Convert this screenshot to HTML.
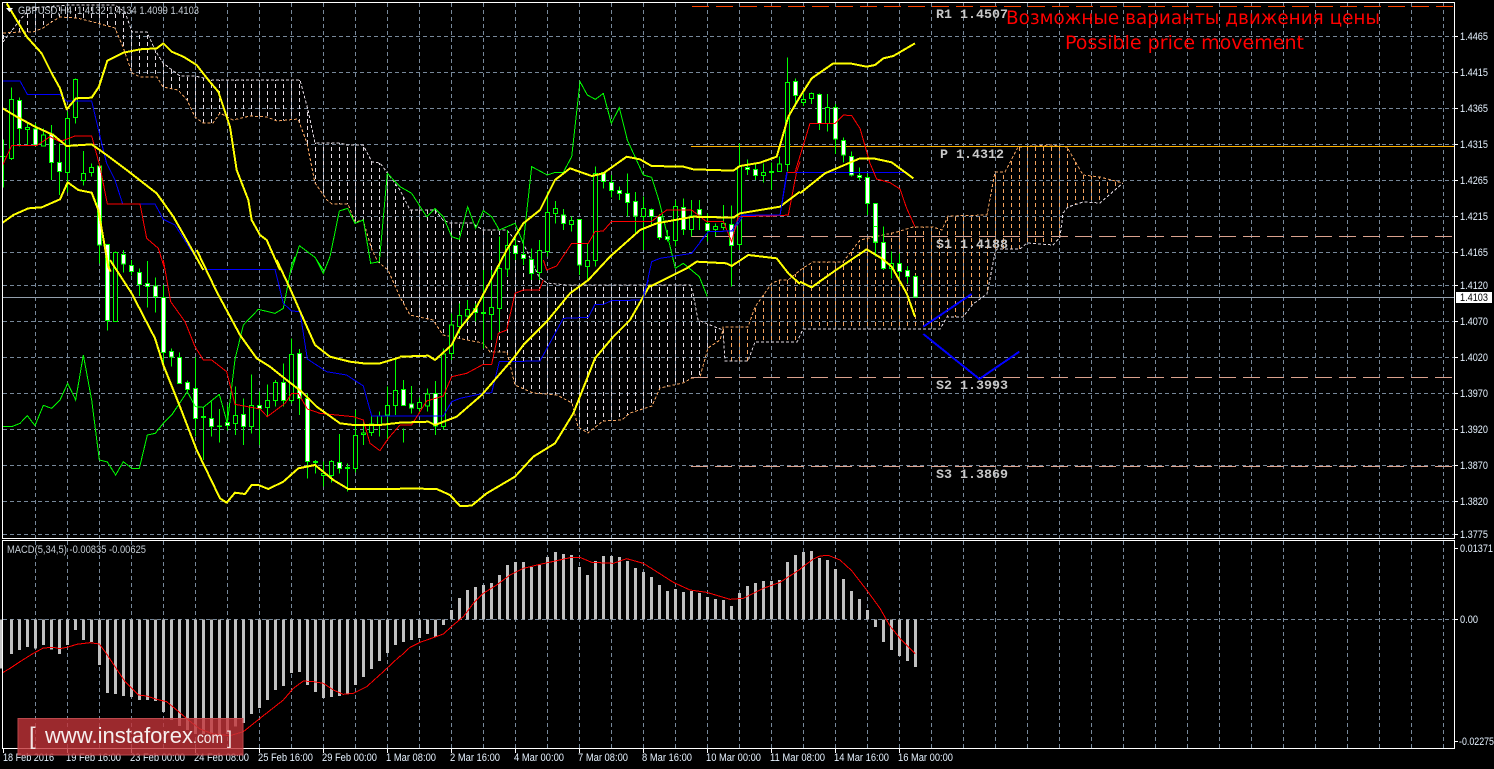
<!DOCTYPE html>
<html><head><meta charset="utf-8"><title>GBPUSD H4</title>
<style>
html,body{margin:0;padding:0;background:#000;width:1494px;height:769px;overflow:hidden}
svg{display:block}
.g{stroke:#77889a;stroke-width:1;stroke-dasharray:4 3;fill:none}
.w{stroke:#0f0;stroke-width:3;fill:none}
.h{stroke:#0f0;stroke-width:3;fill:#000}
.f{stroke:#0f0;stroke-width:3;fill:#fff}
.y{stroke:#ff0;stroke-width:6;fill:none;stroke-linejoin:round}
.b{stroke:#00f;stroke-width:3;fill:none}
.r{stroke:#f00;stroke-width:3;fill:none}
.l{stroke:#0f0;stroke-width:3;fill:none}
.m{stroke:#c0c0c0;stroke-width:9;fill:none}
.c{shape-rendering:crispEdges}
text{font-family:"Liberation Sans",sans-serif}
.ax{font-size:11px;fill:#e6f2ff}
.t{font-size:11px;fill:#e6f2ff}
.lv{font-family:"Liberation Mono",monospace;font-size:13.33px;font-weight:bold;fill:#c8c8c8}
.lg{font-size:11px;fill:#c4ccd4}
</style></head><body>
<svg width="1494" height="769" viewBox="0 0 1494 769" xmlns="http://www.w3.org/2000/svg">
<defs>
<pattern id="hw" patternUnits="userSpaceOnUse" width="8" height="7"><rect x="3" y="0" width="1" height="4" fill="#e2dae2"/></pattern>
<pattern id="hs" patternUnits="userSpaceOnUse" width="8" height="7"><rect x="3" y="0" width="1" height="4" fill="#f4a460"/></pattern>
</defs>
<rect width="1494" height="769" fill="#000"/>

<g class="c">
<!-- grid -->
<path class="g" d="M3 36.5H1454M3 72.5H1454M3 108.5H1454M3 144.5H1454M3 180.5H1454M3 216.5H1454M3 252.5H1454M3 285.5H1454M3 321.5H1454M3 357.5H1454M3 393.5H1454M3 429.5H1454M3 465.5H1454M3 501.5H1454M3 534.5H1454M3 619.5H1454"/>
<path class="g" d="M35.5 3V538M67.5 3V538M99.5 3V538M131.5 3V538M163.5 3V538M195.5 3V538M227.5 3V538M259.5 3V538M291.5 3V538M323.5 3V538M355.5 3V538M387.5 3V538M419.5 3V538M451.5 3V538M483.5 3V538M515.5 3V538M547.5 3V538M579.5 3V538M611.5 3V538M643.5 3V538M675.5 3V538M707.5 3V538M739.5 3V538M771.5 3V538M803.5 3V538M835.5 3V538M867.5 3V538M899.5 3V538M931.5 3V538M963.5 3V538M995.5 3V538M1027.5 3V538M1059.5 3V538M1091.5 3V538M1123.5 3V538M1155.5 3V538M1187.5 3V538M1219.5 3V538M1251.5 3V538M1283.5 3V538M1315.5 3V538M1347.5 3V538M1379.5 3V538M1411.5 3V538M1443.5 3V538"/>
<path class="g" d="M35.5 541V748M67.5 541V748M99.5 541V748M131.5 541V748M163.5 541V748M195.5 541V748M227.5 541V748M259.5 541V748M291.5 541V748M323.5 541V748M355.5 541V748M387.5 541V748M419.5 541V748M451.5 541V748M483.5 541V748M515.5 541V748M547.5 541V748M579.5 541V748M611.5 541V748M643.5 541V748M675.5 541V748M707.5 541V748M739.5 541V748M771.5 541V748M803.5 541V748M835.5 541V748M867.5 541V748M899.5 541V748M931.5 541V748M963.5 541V748M995.5 541V748M1027.5 541V748M1059.5 541V748M1091.5 541V748M1123.5 541V748M1155.5 541V748M1187.5 541V748M1219.5 541V748M1251.5 541V748M1283.5 541V748M1315.5 541V748M1347.5 541V748M1379.5 541V748M1411.5 541V748M1443.5 541V748"/>

<!-- cloud -->
<path fill="url(#hw)" d="M3 42L20 20L30 8L70 5L115 5L125 12L132 32L147 32L155 50L163 63L180 76L195 76L212 80L300 80L308 110L315 143L340 143L347 145L363 145L372 162L380 163L400 190L410 210L435 210L443 220L450 223L472 223L483 230L507 230L515 240L523 243L531 260L539 277L547 283L567 285L690 285L693 293L698 320L715 327L723 330L720 340L708 348L700 377L692 378L683 383L660 388L652 406L630 413L622 420L603 421L588 433L578 427L572 403L557 395L533 393L515 385L507 352L490 352L483 343L467 340L443 335L433 320L410 315L400 297L388 270L378 262L372 250L363 220L355 222L348 204L332 204L327 200L315 183L307 143L298 119L277 121L267 117L250 116L233 120L220 113L213 123L203 123L195 117L187 100L178 90L163 87L157 77L140 77L132 73L123 47L115 28L97 23L77 18L60 17L50 23L43 28L33 32L20 32L3 33Z"/>
<path fill="url(#hs)" d="M723 327L748 327L755 307L772 283L780 280L788 280L803 268L813 262L843 262L860 240L897 232L913 227L933 227L942 230L948 216L987 215L995 172L1005 172L1018 147L1050 145L1067 147L1083 175L1100 177L1123 183L1100 203L1083 202L1068 207L1063 213L1060 237L1053 245L1027 243L1020 249L997 249L995 253L987 294L973 304L963 317L947 317L940 329L803 329L797 342L755 342L748 361L725 361L723 330Z"/>
<path fill="none" stroke="#e2dae2" stroke-dasharray="3 2" d="M3 42L20 20L30 8L70 5L115 5L125 12L132 32L147 32L155 50L163 63L180 76L195 76L212 80L300 80L308 110L315 143L340 143L347 145L363 145L372 162L380 163L400 190L410 210L435 210L443 220L450 223L472 223L483 230L507 230L515 240L523 243L531 260L539 277L547 283L567 285L690 285L693 293L698 320L715 327L723 330L725 361L748 361L755 342L797 342L803 329L940 329L947 317L963 317L973 304L987 294L995 253L997 249L1020 249L1027 243L1053 245L1060 237L1063 213L1068 207L1083 202L1100 203L1123 183"/>
<path fill="none" stroke="#f4a460" stroke-dasharray="3 2" d="M3 33L20 32L33 32L43 28L50 23L60 17L77 18L97 23L115 28L123 47L132 73L140 77L157 77L163 87L178 90L187 100L195 117L203 123L213 123L220 113L233 120L250 116L267 117L277 121L298 119L307 143L315 183L327 200L332 204L348 204L355 222L363 220L372 250L378 262L388 270L400 297L410 315L433 320L443 335L467 340L483 343L490 352L507 352L515 385L533 393L557 395L572 403L578 427L588 433L603 421L622 420L630 413L652 406L660 388L683 383L692 378L700 377L708 348L720 340L723 330L723 327L748 327L755 307L772 283L780 280L788 280L803 268L813 262L843 262L860 240L897 232L913 227L933 227L942 230L948 216L987 215L995 172L1005 172L1018 147L1050 145L1067 147L1083 175L1100 177L1123 183"/>

<!-- levels -->
<path stroke="#ff4500" stroke-width="1" stroke-dasharray="17 7" fill="none" d="M692 6.5H1454"/>
<path stroke="#ffb000" stroke-width="1" fill="none" d="M691 146.5H1454"/>
<path stroke="#dba28e" stroke-width="1" stroke-dasharray="17 7" fill="none" d="M691 236.5H1454M691 377.5H1454M691 466.5H1454"/>
<path stroke="#94a0ae" stroke-width="1" fill="none" d="M3 297.5H1454"/>

<!-- candles z1 -->
<g transform="scale(.33333)">
<path class="w" d="M10 418V563M34 262V480M58 292V440M82 367V435M106 370V440M130 385V440M154 375V540M178 430V585M202 335V578M226 235V370M250 453V557M274 490V530M298 490V790"/>
<path class="w" d="M0 470H16"/>
<path class="h" d="M28 298h12V475h-12zM76 383h12V388h-12zM124 405h12V438h-12zM196 355h12V517h-12zM220 238h12V352h-12zM244 520h12V541h-12zM268 502h12V517h-12z"/>
<path class="f" d="M52 302h12V385h-12zM100 387h12V435h-12zM148 402h12V487h-12zM172 488h12V514h-12zM292 498h12V735h-12z"/>
<path class="l" d="M875 810L898 737L945 772L970 810M990 770L1018 633L1043 625L1065 670L1090 660L1112 790L1138 785L1162 520L1200 560"/>
</g>

<!-- candles z2 -->
<g transform="translate(0,260) scale(.33333)">
<path class="w" d="M322 -47V212M346 -25V184M370 -30V38M394 0V47M418 25V108M442 3V143M466 52V158M490 75V310M514 265V320M538 277V372M562 362V395M586 292V530M610 440V600M634 425V530M658 447V548M682 435V512M706 380V525M730 415V555M754 343V520M778 395V555M802 373V470M826 360V440M850 310V440M874 235V430M898 267V465M922 400V655M946 600V640M970 605V680M994 600V668M1018 522V640M1042 610V695M1066 450V637M1090 485V555M1114 470V528M1138 455V530M1162 380V540M1186 295V465"/>
<path class="h" d="M340 -22h12V184h-12zM604 470h12V472h-12zM652 498h12V500h-12zM700 466h12V490h-12zM748 436h12V500h-12zM796 421h12V443h-12zM820 367h12V422h-12zM868 284h12V421h-12zM940 604h12V607h-12zM964 640h12V647h-12zM988 604h12V647h-12zM1036 622h12V625h-12zM1060 526h12V625h-12zM1084 519h12V523h-12zM1108 492h12V517h-12zM1132 468h12V493h-12zM1156 436h12V465h-12zM1180 392h12V436h-12z"/>
<path class="f" d="M316 -47h12V182h-12zM364 -17h12V12h-12zM388 17h12V34h-12zM412 38h12V73h-12zM436 70h12V79h-12zM460 78h12V109h-12zM484 112h12V277h-12zM508 274h12V291h-12zM532 292h12V370h-12zM556 367h12V388h-12zM580 385h12V475h-12zM628 475h12V499h-12zM676 488h12V497h-12zM724 463h12V499h-12zM772 437h12V445h-12zM844 367h12V422h-12zM892 281h12V415h-12zM916 415h12V605h-12zM1012 608h12V625h-12z"/>
</g>

<!-- candles z4 -->
<g transform="translate(400,280) scale(.33333)">
<path class="w" d="M10 300V377M10 445V488M34 318V400M58 352V400M82 325V395M106 303V465M130 205V450M154 100V240M178 70V160M202 60V125M226 70V125M250 -30V205M274 -30V180"/>
<path class="h" d="M52 367h12V386h-12zM76 342h12V378h-12zM124 222h12V440h-12zM148 135h12V220h-12zM172 106h12V140h-12zM196 88h12V108h-12zM244 97h12V100h-12zM268 82h12V104h-12z"/>
<path class="f" d="M4 328h12V377h-12zM28 372h12V384h-12zM100 340h12V438h-12zM220 86h12V97h-12z"/>
</g>

<!-- candles z3 -->
<g transform="translate(400,60) scale(.33333)">
<path class="w" d="M298 530V815M322 510V650M346 525V600M370 540V615M394 565V660M418 540V660M442 395V590M466 423V490M490 447V510M514 470V515M538 478V645M562 550V660M586 320V620M610 338V385M634 345V412M658 380V420M682 340V470M706 396V520M730 410V570M754 445V500M778 462V540M802 510V545M826 420V560M850 415V525M874 420V530M898 420V510M922 460V545M946 490V530M970 435V510M994 437V680M1018 250V570"/>
<path class="h" d="M292 625h12V745h-12zM316 556h12V627h-12zM412 571h12V638h-12zM436 457h12V575h-12zM460 445h12V460h-12zM508 481h12V493h-12zM556 601h12V620h-12zM580 340h12V601h-12zM724 445h12V470h-12zM820 439h12V541h-12zM868 468h12V508h-12zM940 500h12V508h-12zM964 490h12V503h-12zM1012 320h12V553h-12z"/>
<path class="f" d="M340 556h12V580h-12zM364 583h12V596h-12zM388 598h12V640h-12zM484 465h12V490h-12zM532 478h12V615h-12zM604 338h12V364h-12zM628 368h12V391h-12zM652 392h12V400h-12zM676 400h12V427h-12zM700 424h12V468h-12zM748 449h12V469h-12zM772 470h12V532h-12zM796 530h12V538h-12zM844 443h12V508h-12zM892 448h12V465h-12zM916 490h12V512h-12zM988 493h12V556h-12z"/>
</g>

<!-- candles z5 -->
<g transform="translate(700,0) scale(.33333)">
<path class="w" d="M142 478V525M166 490V540M190 490V548M214 488V570M238 470V514M262 172V515M286 235V320M310 280V318M334 278V312M358 280V390M382 282V395M406 312V462M430 412V488M454 455V530M478 502V540M502 520V645M526 610V760"/>
<path class="h" d="M184 517h12V526h-12zM208 515h12V518h-12zM232 492h12V514h-12zM256 247h12V493h-12zM304 298h12V307h-12zM328 280h12V296h-12zM376 322h12V370h-12z"/>
<path class="f" d="M136 503h12V508h-12zM160 508h12V526h-12zM280 245h12V287h-12zM352 283h12V370h-12zM400 322h12V417h-12zM424 422h12V465h-12zM448 470h12V525h-12zM472 526h12V532h-12zM496 532h12V610h-12zM520 610h12V727h-12z"/>
</g>

<!-- candles z6 -->
<g transform="translate(700,230) scale(.33333)">
<path class="w" d="M526 30V80M550 -10V120M574 65V145M598 70V140M622 108V160M646 135V202"/>
<path class="h" d="M568 100h12V115h-12z"/>
<path class="f" d="M520 -10h12V36h-12zM544 38h12V115h-12zM592 100h12V124h-12zM616 121h12V139h-12zM640 139h12V201h-12z"/>
</g>

<!-- indicators z1 -->
<g transform="scale(.33333)">
<path class="b" d="M8 243L60 243L82 283L180 283L200 303L275 303L305 430L320 490L345 540L368 612L465 612L490 658L525 675L560 730L610 808L830 808"/>
<path class="r" d="M8 495L35 437L110 437L150 410L180 425L225 408L275 408L300 500L322 612L420 612L440 715L475 745L495 810"/>
<path class="y" d="M20 10L50 60L80 110L125 160L155 220L180 265L200 328L228 295L275 293L297 260L322 182L370 158L420 148L470 145L490 130L515 155L550 170L590 195L625 240L655 275L690 380L710 510L745 600L755 660L780 705L800 720L840 810"/>
<path class="y" d="M8 325L50 350L105 380L160 405L200 438L275 433L320 465L380 510L470 580L520 650L560 720L610 810"/>
<path class="y" d="M8 668L40 645L85 625L125 622L180 598L203 547L235 570L275 578L295 630L325 800L332 815"/>
</g>

<!-- indicators z2 -->
<g transform="translate(0,260) scale(.33333)">
<path class="l" d="M8 500L35 500L60 490L82 467L105 497L130 436L155 445L180 420L203 370L227 420L250 285L275 420L298 600L322 606L347 645L370 605L395 625L418 625L442 525L466 520L490 490L515 465L562 395L586 440L610 442L658 403L682 490L705 298L730 195L775 148L825 160L850 145L875 15L885 -10"/>
<path class="l" d="M950 0L970 40L990 -10"/>
<path class="b" d="M825 28L850 130L875 153L900 155L922 297L980 335L1040 345L1090 378L1115 468L1200 468"/>
<path class="r" d="M490 0L512 125L555 185L585 260L610 300L635 300L680 335L705 433L780 447L802 470L855 430L875 400L895 400L922 447L960 460L1060 470L1090 480L1110 550L1140 572L1165 535L1200 495"/>
<path class="y" d="M830 0L870 85L905 165L945 255L990 290L1050 305L1090 310L1140 310L1200 292"/>
<path class="y" d="M590 -30L650 95L720 225L770 295L810 320L860 360L905 395L950 440L1020 490L1060 495L1140 495L1200 488"/>
<path class="y" d="M330 0L395 100L465 235L490 315L540 440L590 570L660 715L680 728L705 698L735 702L755 675L775 675L805 687L850 665L895 625L945 615L1000 660L1045 687L1200 687"/>
</g>

<!-- indicators z4 -->
<g transform="translate(400,280) scale(.33333)">
<path class="b" d="M0 408L130 408L155 365L180 355L250 340L275 338L298 245L420 243L490 115L565 112L585 73L610 73L635 62L725 60L745 0"/>
<path class="r" d="M0 435L35 435L80 363L130 348L155 290L200 280L250 253L275 253L295 160L320 150L345 40L370 30L418 30L430 0"/>
<path class="y" d="M0 230L85 227L105 240L155 195L180 145L225 90L270 5"/>
<path class="y" d="M0 428L85 425L105 435L170 410L245 345L340 235L370 195L440 125L510 40L565 0"/>
<path class="y" d="M0 625L110 627L150 645L180 678L215 677L260 640L345 590L400 530L465 490L520 400L585 235L640 170L690 120L750 15"/>
</g>

<!-- indicators z3 -->
<g transform="translate(400,60) scale(.33333)">
<path class="l" d="M0 380L35 400L80 470L105 445L130 470L155 530L178 538L203 440L227 505L250 452L275 470L298 510L345 490L370 550L395 320L442 345L466 337L490 337L515 290L540 65L562 105L586 118L610 100L634 190L658 143L682 240L730 345L755 352L778 425L826 625L850 610L898 650L922 710"/>
<path class="b" d="M730 720L755 605L780 595L875 580L925 515L1000 513L1030 467L1140 467L1160 337L1200 337"/>
<path class="r" d="M430 600L440 630L470 618L515 550L565 550L585 515L610 513L635 484L755 484L800 450L875 450L920 485L970 485L995 545L1015 470L1140 467L1165 465L1190 335L1200 305"/>
<path class="y" d="M270 665L320 570L370 490L420 450L465 360L510 325L575 348L610 340L680 290L720 298L755 318L850 320L880 328L1000 332L1020 318L1080 308L1130 290L1165 170L1200 110"/>
<path class="y" d="M565 660L630 590L720 510L770 490L880 470L1000 473L1020 460L1140 440L1200 395"/>
<path class="y" d="M750 680L860 625L890 605L980 610L995 618L1045 585L1130 595L1165 640L1200 672"/>
</g>

<!-- indicators z5 -->
<g transform="translate(700,0) scale(.33333)">
<path class="b" d="M0 725L25 695L95 693L125 645L240 645L262 517L620 517"/>
<path class="r" d="M262 517L285 517L330 370L405 370L430 345L455 347L480 385L510 490L530 537L570 548L600 567L620 625L645 680"/>
<path class="y" d="M300 290L335 235L400 190L450 190L500 200L525 195L550 175L580 168L645 130"/>
<path class="y" d="M300 580L375 520L480 475L520 475L575 487L640 535"/>
</g>

<!-- indicators z6 + arrows -->
<g transform="translate(700,230) scale(.33333)">
<path class="y" d="M300 155L335 172L405 122L500 58L545 85L575 110L620 190L645 260"/>
<path fill="none" stroke="#00f" stroke-width="6" d="M670 290L815 192M670 312L838 447L958 365"/>
</g>

<!-- MACD -->
<g transform="translate(0,530) scale(.33333)">
<path class="m" d="M3 268V416M34 268V372M58 268V360M82 268V351M106 268V355M130 268V345M154 268V359M178 268V372M202 268V345M226 268V300M250 268V330M274 268V336M298 268V405M322 268V489M346 268V492M370 268V498M394 268V501M418 268V510M442 268V510M466 268V513M490 268V546M514 268V570M538 268V588M562 268V600M586 268V612M610 268V612M634 268V612M658 268V612M682 268V612M706 268V590M730 268V579M754 268V552M778 268V534M802 268V510M826 268V480M850 268V468M874 268V429M898 268V426M922 268V465M946 268V486M970 268V504M994 268V501M1018 268V498M1042 268V492M1066 268V465M1090 268V441M1114 268V417M1138 268V393M1162 268V369M1186 268V345"/>
<path class="r" d="M8 428L30 415L60 395L100 370L130 354L160 352L180 356L205 351L230 343L270 338L298 342L320 372L345 410L375 455L415 495L440 498L470 508L500 515L530 540L565 570L600 597L640 612L690 617L730 605L780 565L850 510L880 475L910 453L940 455L970 460L1000 480L1030 493L1060 490L1100 470L1150 425L1200 378"/>
</g>
<g transform="translate(400,530) scale(.33333)">
<path class="m" d="M10 268V336M34 268V330M58 268V324M82 268V312M106 268V321M130 268V285M154 268V240M178 268V204M202 268V180M226 268V171M250 268V165M274 268V159M298 268V135M322 268V105M346 268V96M370 268V96M394 268V111M418 268V105M442 268V81M466 268V66M490 268V72M514 268V75M538 268V111M562 268V135M586 268V93M610 268V78M634 268V78M658 268V81M682 268V93M706 268V114M730 268V126M754 268V141M778 268V165M802 268V183M826 268V177M850 268V186M874 268V183M898 268V189M922 268V201M946 268V207M970 268V210M994 268V228M1018 268V189M1042 268V168M1066 268V159M1090 268V153M1114 268V153M1138 268V150M1162 268V96M1186 268V75"/>
<path class="r" d="M0 380L30 352L60 337L100 323L130 312L160 285L190 260L220 220L250 190L290 165L330 135L370 115L420 103L470 92L510 83L540 82L575 97L640 100L680 86L730 100L770 125L820 157L870 180L920 187L990 208L1030 205L1090 175L1140 157L1200 118"/>
</g>
<g transform="translate(780,530) scale(.33333)">
<path class="m" d="M70 268V66M94 268V63M118 268V84M142 268V90M166 268V117M190 268V147M214 268V183M238 268V207M262 268V240M286 268V291M310 268V336M334 268V360M358 268V378M382 268V393M406 268V411"/>
<path class="r" d="M60 117L100 87L120 78L145 76L180 90L215 122L260 180L300 235L330 288L360 325L405 371"/>
</g>

<!-- frame -->
<path fill="none" stroke="#fff" stroke-width="1" d="M2.5 2.5H1454.5V538.5H2.5ZM2.5 540.5H1454.5V748.5H2.5Z"/>
<!-- ticks -->
<path fill="none" stroke="#fff" stroke-width="1" d="M1455 36.5h3M1455 72.5h3M1455 108.5h3M1455 144.5h3M1455 180.5h3M1455 216.5h3M1455 252.5h3M1455 285.5h3M1455 321.5h3M1455 357.5h3M1455 393.5h3M1455 429.5h3M1455 465.5h3M1455 501.5h3M1455 534.5h3M1455 548.5h3M1455 619.5h3M1455 741.5h3"/>
<path fill="none" stroke="#fff" stroke-width="1" d="M3.5 749v4M67.5 749v4M131.5 749v4M195.5 749v4M259.5 749v4M323.5 749v4M387.5 749v4M451.5 749v4M515.5 749v4M579.5 749v4M643.5 749v4M707.5 749v4M771.5 749v4M835.5 749v4M899.5 749v4"/>
<rect x="1456" y="292" width="36" height="11" fill="#fff"/>
</g>

<!-- top-left label -->
<path d="M6 8h7l-3.5 4z" fill="#fff"/>
<text class="lg" x="18" y="14" textLength="181" lengthAdjust="spacingAndGlyphs" xml:space="preserve">GBPUSD,H4  1.4132 1.4134 1.4099 1.4103</text>
<text class="lg" x="7" y="553" textLength="139" lengthAdjust="spacingAndGlyphs">MACD(5,34,5) -0.00835 -0.00625</text>

<!-- level labels -->
<text class="lv" x="936" y="18">R1 1.4507</text>
<text class="lv" x="940" y="158">P 1.4312</text>
<text class="lv" x="936" y="248">S1 1.4188</text>
<text class="lv" x="936" y="389">S2 1.3993</text>
<text class="lv" x="936" y="478">S3 1.3869</text>

<!-- red title -->
<text x="1006" y="24" font-size="19" fill="#f00" textLength="374" lengthAdjust="spacingAndGlyphs" style="font-family:'DejaVu Sans',sans-serif">Возможные варианты движения цены</text>
<text x="1065" y="49" font-size="19" fill="#f00" textLength="239" lengthAdjust="spacingAndGlyphs" style="font-family:'DejaVu Sans',sans-serif">Possible price movement</text>

<!-- right axis -->
<g class="ax">
<text x="1460" y="40" textLength="28" lengthAdjust="spacingAndGlyphs">1.4465</text>
<text x="1460" y="76" textLength="28" lengthAdjust="spacingAndGlyphs">1.4415</text>
<text x="1460" y="112" textLength="28" lengthAdjust="spacingAndGlyphs">1.4365</text>
<text x="1460" y="148" textLength="28" lengthAdjust="spacingAndGlyphs">1.4315</text>
<text x="1460" y="184" textLength="28" lengthAdjust="spacingAndGlyphs">1.4265</text>
<text x="1460" y="220" textLength="28" lengthAdjust="spacingAndGlyphs">1.4215</text>
<text x="1460" y="256" textLength="28" lengthAdjust="spacingAndGlyphs">1.4165</text>
<text x="1460" y="289" textLength="28" lengthAdjust="spacingAndGlyphs">1.4120</text>
<text x="1460" y="325" textLength="28" lengthAdjust="spacingAndGlyphs">1.4070</text>
<text x="1460" y="361" textLength="28" lengthAdjust="spacingAndGlyphs">1.4020</text>
<text x="1460" y="397" textLength="28" lengthAdjust="spacingAndGlyphs">1.3970</text>
<text x="1460" y="433" textLength="28" lengthAdjust="spacingAndGlyphs">1.3920</text>
<text x="1460" y="469" textLength="28" lengthAdjust="spacingAndGlyphs">1.3870</text>
<text x="1460" y="505" textLength="28" lengthAdjust="spacingAndGlyphs">1.3820</text>
<text x="1460" y="538" textLength="28" lengthAdjust="spacingAndGlyphs">1.3775</text>
<text x="1460" y="552" textLength="33" lengthAdjust="spacingAndGlyphs">0.01371</text>
<text x="1460" y="623" textLength="18" lengthAdjust="spacingAndGlyphs">0.00</text>
<text x="1459" y="745" textLength="35" lengthAdjust="spacingAndGlyphs">-0.02275</text>
</g>
<text x="1460" y="301" font-size="11" fill="#000" textLength="28" lengthAdjust="spacingAndGlyphs">1.4103</text>

<!-- time axis -->
<g class="t">
<text x="3" y="761" textLength="51" lengthAdjust="spacingAndGlyphs">18 Feb 2016</text>
<text x="66" y="761" textLength="55" lengthAdjust="spacingAndGlyphs">19 Feb 16:00</text>
<text x="130" y="761" textLength="55" lengthAdjust="spacingAndGlyphs">23 Feb 00:00</text>
<text x="194" y="761" textLength="55" lengthAdjust="spacingAndGlyphs">24 Feb 08:00</text>
<text x="258" y="761" textLength="55" lengthAdjust="spacingAndGlyphs">25 Feb 16:00</text>
<text x="322" y="761" textLength="55" lengthAdjust="spacingAndGlyphs">29 Feb 00:00</text>
<text x="386" y="761" textLength="50" lengthAdjust="spacingAndGlyphs">1 Mar 08:00</text>
<text x="450" y="761" textLength="50" lengthAdjust="spacingAndGlyphs">2 Mar 16:00</text>
<text x="514" y="761" textLength="50" lengthAdjust="spacingAndGlyphs">4 Mar 00:00</text>
<text x="578" y="761" textLength="50" lengthAdjust="spacingAndGlyphs">7 Mar 08:00</text>
<text x="642" y="761" textLength="50" lengthAdjust="spacingAndGlyphs">8 Mar 16:00</text>
<text x="706" y="761" textLength="55" lengthAdjust="spacingAndGlyphs">10 Mar 00:00</text>
<text x="770" y="761" textLength="55" lengthAdjust="spacingAndGlyphs">11 Mar 08:00</text>
<text x="834" y="761" textLength="55" lengthAdjust="spacingAndGlyphs">14 Mar 16:00</text>
<text x="898" y="761" textLength="55" lengthAdjust="spacingAndGlyphs">16 Mar 00:00</text>
</g>

<!-- watermark -->
<rect x="17.5" y="718" width="226" height="37.5" fill="#c23338" fill-opacity=".8"/>
<rect x="18" y="718.5" width="225" height="36.5" fill="none" stroke="#c8565a" stroke-opacity=".7"/>
<text x="29" y="744" font-size="24" fill="#f2e4e4">[</text>
<text x="45" y="743" font-size="22.5" fill="#f6eeee" textLength="148" lengthAdjust="spacingAndGlyphs">www.instaforex</text>
<text x="193" y="743" font-size="16" fill="#f6eeee" textLength="30" lengthAdjust="spacingAndGlyphs">.com</text>
<text x="227" y="744" font-size="18" fill="#f2e4e4">]</text>
</svg>
</body></html>
